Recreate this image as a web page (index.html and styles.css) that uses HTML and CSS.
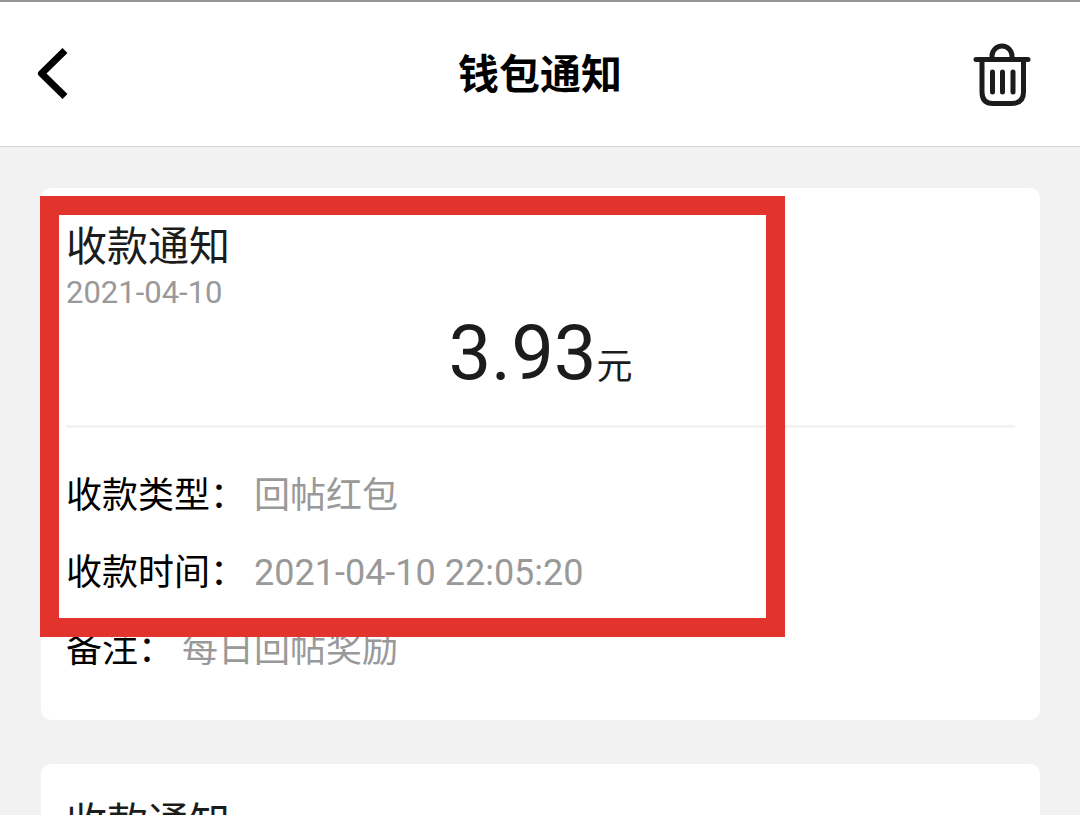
FILE: index.html
```html
<!DOCTYPE html>
<html lang="zh-CN">
<head>
<meta charset="utf-8">
<meta name="viewport" content="width=device-width, initial-scale=1">
<title>钱包通知</title>
<link rel="stylesheet" href="styles.css">
</head>
<body>
<div class="app">
  <header class="header">
    <button class="icon-button" type="button" aria-label="返回">
      <svg width="64" height="72" viewBox="0 0 64 72" fill="none" stroke="#000" stroke-width="7" stroke-linejoin="round"><path d="M41 14.500 17.500 37.500 41 60.500"/></svg>
    </button>
    <h1 class="header-title">钱包通知</h1>
    <button class="icon-button" type="button" aria-label="删除">
      <svg width="64" height="72" viewBox="0 0 64 72" fill="none" stroke="#1c1c1c" stroke-width="5" stroke-linecap="round" stroke-linejoin="round"><path d="M4 23.500H56M20 23V20a10 10 0 0 1 20 0V23M10 24V56Q10 67.500 21 67.500H39Q51.500 67.500 51.500 56V24M20.500 36V56M30.500 36V56M41 36V56"/></svg>
    </button>
  </header>
  <main class="list">
    <article class="card">
      <h2 class="card-title">收款通知</h2>
      <time class="card-date">2021-04-10</time>
      <p class="amount">3.93<span class="unit">元</span></p>
      <hr class="rule">
      <dl class="details">
        <div class="row"><dt>收款类型：</dt><dd>回帖红包</dd></div>
        <div class="row"><dt>收款时间：</dt><dd>2021-04-10 22:05:20</dd></div>
        <div class="row"><dt>备注：</dt><dd>每日回帖奖励</dd></div>
      </dl>
      <div class="highlight"></div>
    </article>
    <article class="card">
      <h2 class="card-title">收款通知</h2>
    </article>
  </main>
</div>
</body>
</html>
```
FILE: styles.css
```css
* {
  box-sizing: border-box;
  margin: 0;
  padding: 0;
}

body {
  font-family: Roboto, "Noto Sans CJK SC", sans-serif;
  background: #f2f2f2;
  color: #1c1c1c;
}

.app {
  height: 100vh;
  overflow: hidden;
}

.header {
  display: flex;
  align-items: center;
  justify-content: space-between;
  padding: 34px 44px 38px 24px;
  border-top: 2px solid #969696;
  border-bottom: 1px solid #d4d4d4;
  background: #fff;
}

.header-title {
  flex: 1;
  padding-top: 6px;
  padding-left: 20px;
  font-size: 41px;
  line-height: 60px;
  font-weight: 700;
  text-align: center;
  color: #000;
}

.icon-button {
  display: flex;
  border: 0;
  background: none;
}

.list {
  display: grid;
  gap: 44px;
  padding: 41px 40px 44px 41px;
}

.card {
  position: relative;
  padding: 31px 25px 31px;
  border-radius: 10px;
  background: #fff;
}

.card-title {
  font-size: 41px;
  line-height: 56px;
  font-weight: 400;
}

.card-date {
  display: block;
  font-size: 31px;
  line-height: 36px;
  color: #999;
}

.amount {
  padding-bottom: 30px;
  font-size: 76px;
  line-height: 84px;
  text-align: center;
}

.unit {
  font-size: 36px;
  line-height: 36px;
}

.rule {
  height: 3px;
  border: 0;
  background: #f3f3f3;
}

.details {
  padding-top: 30px;
  font-size: 36px;
  line-height: 77px;
}

.row {
  display: flex;
  gap: 8px;
}

.row dt {
  color: #000;
}

.row dd {
  color: #999;
}

.highlight {
  position: absolute;
  top: 8px;
  left: -1px;
  width: 745px;
  height: 441px;
  border: 19px solid #e2332d;
  pointer-events: none;
}
```
